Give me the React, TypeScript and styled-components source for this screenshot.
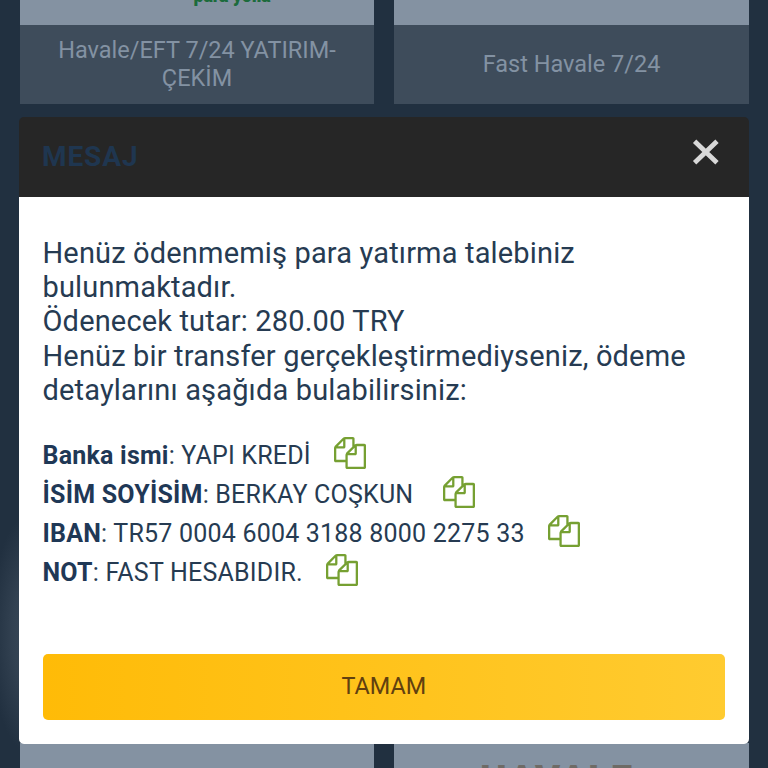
import React from "react";
import styled, { createGlobalStyle } from "styled-components";

interface DetailItem {
  label: string;
  value: string;
}

interface MethodItem {
  name: string;
  logo?: string;
}

const methods: MethodItem[] = [
  { name: "Havale/EFT 7/24 YATIRIM-ÇEKİM", logo: "para yolla" },
  { name: "Fast Havale 7/24" },
];

const details: DetailItem[] = [
  { label: "Banka ismi", value: "YAPI KREDİ" },
  { label: "İSİM SOYİSİM", value: "BERKAY COŞKUN " },
  { label: "IBAN", value: "TR57 0004 6004 3188 8000 2275 33" },
  { label: "NOT", value: "FAST HESABIDIR." },
];

const CopyIcon = () => (
  <svg viewBox="0 0 1792 1792" fill="currentColor">
    <path d="M1696 384q40 0 68 28t28 68v1216q0 40-28 68t-68 28h-960q-40 0-68-28t-28-68v-288h-544q-40 0-68-28t-28-68v-672q0-40 20-88t48-76l408-408q28-28 76-48t88-20h416q40 0 68 28t28 68v328q68-40 128-40h416zm-544 213l-299 299h299v-299zm-640-384l-299 299h299v-299zm196 647l316-316v-416h-384v416q0 40-28 68t-68 28h-416v640h512v-256q0-40 20-88t48-76zm956 804v-1152h-384v416q0 40-28 68t-68 28h-416v640h896z" />
  </svg>
);

const CloseIcon = () => (
  <svg width="28" height="28" viewBox="0 0 28 28" fill="none">
    <path
      d="M2.6 3.3L25 24.7M25 3.3L2.6 24.7"
      stroke="#d8d8d8"
      strokeWidth="4.8"
    />
  </svg>
);

const App = () => {
  return (
    <Page>
      <GlobalStyle />
      <MethodGrid>
        {methods.map((method) => (
          <MethodCard key={method.name}>
            <MethodLogo>
              <span>{method.logo}</span>
            </MethodLogo>
            <MethodName>{method.name}</MethodName>
          </MethodCard>
        ))}
      </MethodGrid>
      <MethodGrid>
        <NextCard />
        <NextCard>
          <Brand>HAVALE</Brand>
        </NextCard>
      </MethodGrid>
      <Overlay>
        <Modal>
          <ModalHeader>
            <Title>MESAJ</Title>
            <CloseButton aria-label="Kapat">
              <CloseIcon />
            </CloseButton>
          </ModalHeader>
          <ModalBody>
            <Message>
              Henüz ödenmemiş para yatırma talebiniz
              <br />
              bulunmaktadır.
              <br />
              Ödenecek tutar: 280.00 TRY
              <br />
              Henüz bir transfer gerçekleştirmediyseniz, ödeme
              <br />
              detaylarını aşağıda bulabilirsiniz:
            </Message>
            <DetailList>
              {details.map((detail) => (
                <DetailRow key={detail.label}>
                  <span>
                    <b>{detail.label}</b>: {detail.value}
                  </span>
                  <CopyButton aria-label="Kopyala">
                    <CopyIcon />
                  </CopyButton>
                </DetailRow>
              ))}
            </DetailList>
            <SubmitButton>TAMAM</SubmitButton>
          </ModalBody>
        </Modal>
      </Overlay>
    </Page>
  );
};

const GlobalStyle = createGlobalStyle`
  * {
    box-sizing: border-box;
  }
  body {
    margin: 0;
    font-family: Roboto, sans-serif;
  }
  button {
    border: none;
    background: none;
    padding: 0;
    font-family: inherit;
  }
`;

const Page = styled.div`
  position: relative;
  height: 768px;
  overflow: hidden;
  display: flex;
  flex-direction: column;
  justify-content: space-between;
  background: radial-gradient(
      ellipse 40px 120px at 30px 634px,
      #3a4958 0%,
      #324151 45%,
      #213040 100%
    )
    #213040;
`;

const MethodGrid = styled.div`
  display: grid;
  grid-template-columns: 354px 355px;
  column-gap: 20px;
  padding-left: 20px;
`;

const MethodCard = styled.div`
  height: 104px;
  display: flex;
  flex-direction: column;
  overflow: hidden;
`;

const MethodLogo = styled.div`
  height: 25px;
  display: flex;
  align-items: flex-end;
  justify-content: center;
  padding: 0 0 19px 70px;
  background: #8492a2;
  color: #1c6b3c;
  font-size: 18px;
  font-weight: 900;
  line-height: 20px;
  letter-spacing: -0.2px;
`;

const MethodName = styled.div`
  flex: 1;
  display: flex;
  align-items: center;
  justify-content: center;
  padding: 0 20px 2px;
  background: #3e4c5b;
  color: #8392a3;
  font-size: 23.5px;
  line-height: 28px;
  text-align: center;
`;

const NextCard = styled.div`
  height: 25px;
  overflow: hidden;
  background: #8492a2;
`;

const Brand = styled.div`
  padding: 18px 0 0 86px;
  color: #6e6b66;
  font-size: 38px;
  font-weight: 900;
  line-height: 38px;
  letter-spacing: 1.8px;
`;

const Overlay = styled.div`
  position: absolute;
  inset: 0;
  display: flex;
  flex-direction: column;
  padding: 117px 19px 0;
`;

const Modal = styled.div`
  width: 730px;
  height: 626.5px;
  display: flex;
  flex-direction: column;
`;

const ModalHeader = styled.div`
  height: 80px;
  display: flex;
  justify-content: space-between;
  padding: 0 29px 0 23px;
  border-radius: 5px 5px 0 0;
  background: #262626;
`;

const Title = styled.div`
  color: #1f3650;
  font-size: 28px;
  font-weight: 700;
  line-height: 79px;
  letter-spacing: 0.9px;
`;

const CloseButton = styled.button`
  height: 28px;
  margin-top: 21px;
  svg {
    display: block;
  }
`;

const ModalBody = styled.div`
  flex: 1;
  display: flex;
  flex-direction: column;
  padding: 39px 24px 23.5px 23.5px;
  border-radius: 0 0 5px 5px;
  background: #ffffff;
  color: #263b52;
`;

const Message = styled.div`
  font-size: 29px;
  line-height: 34.2px;
  letter-spacing: 0.16px;
  white-space: nowrap;
`;

const DetailList = styled.div`
  margin-top: 29px;
  font-size: 25px;
  line-height: 39px;
  letter-spacing: 0.21px;
`;

const DetailRow = styled.div`
  height: 39px;
  display: flex;
  white-space: pre;
  b {
    font-weight: 700;
    color: #1f3856;
  }
`;

const CopyButton = styled.button`
  width: 32px;
  height: 32px;
  margin: 0.5px 0 0 23.5px;
  color: #76a032;
  svg {
    display: block;
  }
`;

const SubmitButton = styled.button`
  height: 66px;
  margin-top: auto;
  border-radius: 5px;
  background: linear-gradient(90deg, #ffbb07, #ffcb30);
  color: #61400f;
  font-size: 23.4px;
  line-height: 63px;
  padding-bottom: 2px;
`;

export default App;
